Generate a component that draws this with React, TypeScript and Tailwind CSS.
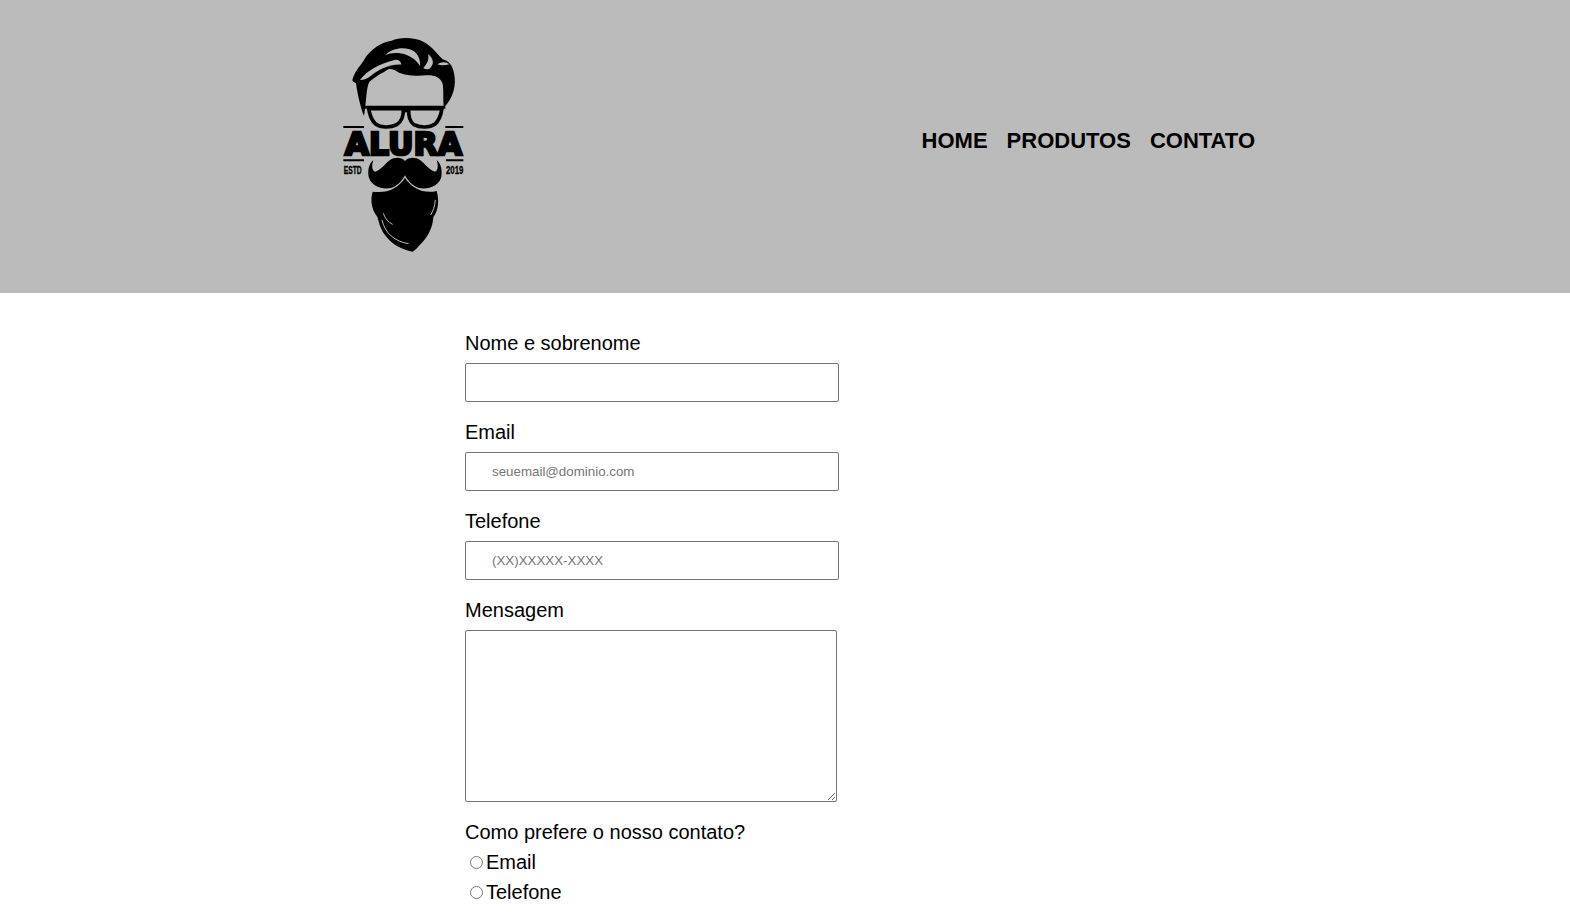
function Logo() {
  return (
    <svg width="170" height="240" viewBox="0 0 510 720" className="ml-[5px] shrink-0">
      {/* hair */}
      <path
        fill="#000"
        d="M97 180 C105 150 125 135 135 115 C150 90 185 65 215 62 C240 50 285 52 310 65 C335 78 355 105 368 118 C385 122 398 135 402 160 C410 195 400 235 372 262 C368 245 372 215 368 192 C362 172 345 165 318 166 C285 170 250 165 232 155 C222 148 212 146 205 148 C190 158 165 170 148 186 C138 205 140 240 132 288 C122 265 112 220 108 190 C104 186 98 186 97 180 Z"
      />
      <path fill="#bbb" d="M195 106 C215 84 258 78 282 94 C296 105 302 122 300 138 C286 115 262 102 235 99 C220 98 206 100 195 106 Z" />
      <path fill="#bbb" d="M310 144 C322 130 328 118 324 102 C342 116 344 134 328 146 C322 149 315 148 310 144 Z" />
      <path fill="#bbb" d="M120 180 C138 154 175 132 226 119 C237 119 243 124 244 134 C206 132 172 152 152 168 C141 176 130 181 120 180 Z" />
      <path fill="#bbb" d="M352 133 C364 124 379 125 388 133 C376 136 364 138 352 133 Z" />
      {/* glasses */}
      <path fill="none" stroke="#000" strokeWidth="9" d="M134 262 H376" />
      <path fill="#000" d="M246 258 H270 V284 C262 274 254 274 246 284 Z" />
      <path
        fill="none"
        stroke="#000"
        strokeWidth="11"
        strokeLinejoin="round"
        d="M146 266 H250 C251 290 244 306 230 314 C212 324 182 323 168 313 C154 302 149 284 146 266 Z"
      />
      <path
        fill="none"
        stroke="#000"
        strokeWidth="11"
        strokeLinejoin="round"
        d="M266 266 H366 C363 284 358 302 344 313 C330 323 300 324 282 314 C270 306 265 290 266 266 Z"
      />
      <path stroke="#000" strokeWidth="6" d="M70 321 H132 M376 321 H430 M70 421 H132 M378 421 H430" />
      {/* name */}
      <text
        x="74"
        y="404"
        fill="#000"
        stroke="#000"
        strokeWidth="8"
        textLength="352"
        lengthAdjust="spacingAndGlyphs"
        className="font-['DejaVu_Sans',sans-serif] font-bold text-[98px]"
      >
        ALURA
      </text>
      <text
        x="71"
        y="462"
        fill="#000"
        stroke="#000"
        strokeWidth="1"
        textLength="54"
        lengthAdjust="spacingAndGlyphs"
        className="font-['Liberation_Sans',sans-serif] font-bold text-[33px]"
      >
        ESTD
      </text>
      <text
        x="378"
        y="462"
        fill="#000"
        stroke="#000"
        strokeWidth="1"
        textLength="52"
        lengthAdjust="spacingAndGlyphs"
        className="font-['Liberation_Sans',sans-serif] font-bold text-[33px]"
      >
        2019
      </text>
      {/* mustache */}
      <path
        fill="#000"
        d="M255 423 C245 412 225 410 210 420 C195 432 180 452 165 455 C155 452 155 435 160 420 C148 430 142 450 146 470 C152 495 180 508 208 505 C228 502 245 485 255 466 C265 485 282 502 302 505 C330 508 358 495 364 470 C368 450 362 430 350 420 C355 435 355 452 345 455 C330 452 315 432 300 420 C285 410 265 412 255 423 Z"
      />
      {/* beard */}
      <path
        fill="#000"
        d="M158 515 C180 518 205 516 222 505 C238 495 248 485 255 473 C262 485 272 495 288 505 C305 516 330 518 350 513 C358 540 356 570 340 592 C338 622 324 652 302 672 C294 682 286 690 278 695 C250 690 215 675 195 645 C180 625 178 610 172 590 C155 570 150 540 158 515 Z"
      />
      <path fill="none" stroke="#bbb" strokeWidth="3" d="M190 580 C195 595 205 608 218 613" />
      <path fill="none" stroke="#bbb" strokeWidth="3" d="M186 600 C195 640 225 665 266 671" />
      <path fill="none" stroke="#bbb" strokeWidth="3" d="M346 540 C344 560 340 572 332 585" />
    </svg>
  );
}

function Header() {
  return (
    <header className="bg-[#bbbbbb] h-[293px] pt-5 pb-[33px]">
      <div className="w-[940px] h-full mx-auto flex items-center justify-between">
        <Logo />
        <nav className="flex gap-[19px] text-[22px] font-bold text-black">
          <a href="#">HOME</a>
          <a href="#">PRODUTOS</a>
          <a href="#">CONTATO</a>
        </nav>
      </div>
    </header>
  );
}

function Field({ label, type, placeholder }: { label: string; type: string; placeholder?: string }) {
  return (
    <div className="mb-[19px]">
      <label className="block text-[20px] leading-[23px] mb-2">{label}</label>
      <input
        type={type}
        placeholder={placeholder}
        className="block w-[374px] h-[39px] border border-[#767676] rounded-[2px] pl-[26px] bg-white text-[13.33px] placeholder:text-[#757575] placeholder:opacity-100"
      />
    </div>
  );
}

export default function App() {
  return (
    <div className="font-['Liberation_Sans',Arial,sans-serif] text-black bg-white min-h-screen">
      <Header />
      <main className="w-[940px] mx-auto pl-[150px] pt-[39px]">
        <form>
          <Field label="Nome e sobrenome" type="text" />
          <Field label="Email" type="email" placeholder="seuemail@dominio.com" />
          <Field label="Telefone" type="tel" placeholder="(XX)XXXXX-XXXX" />
          <div className="mb-[19px]">
            <label className="block text-[20px] leading-[23px] mb-2">Mensagem</label>
            <textarea className="block w-[372px] h-[172px] border border-[#767676] rounded-[2px] bg-white resize" />
          </div>
          <fieldset>
            <legend className="text-[20px] leading-[23px]">Como prefere o nosso contato?</legend>
            <label className="flex items-center h-[30px] mt-[3px] text-[20px]">
              <input type="radio" name="contato" className="ml-[5px] mr-[3px]" />
              Email
            </label>
            <label className="flex items-center h-[30px] text-[20px]">
              <input type="radio" name="contato" className="ml-[5px] mr-[3px]" />
              Telefone
            </label>
          </fieldset>
        </form>
      </main>
    </div>
  );
}
